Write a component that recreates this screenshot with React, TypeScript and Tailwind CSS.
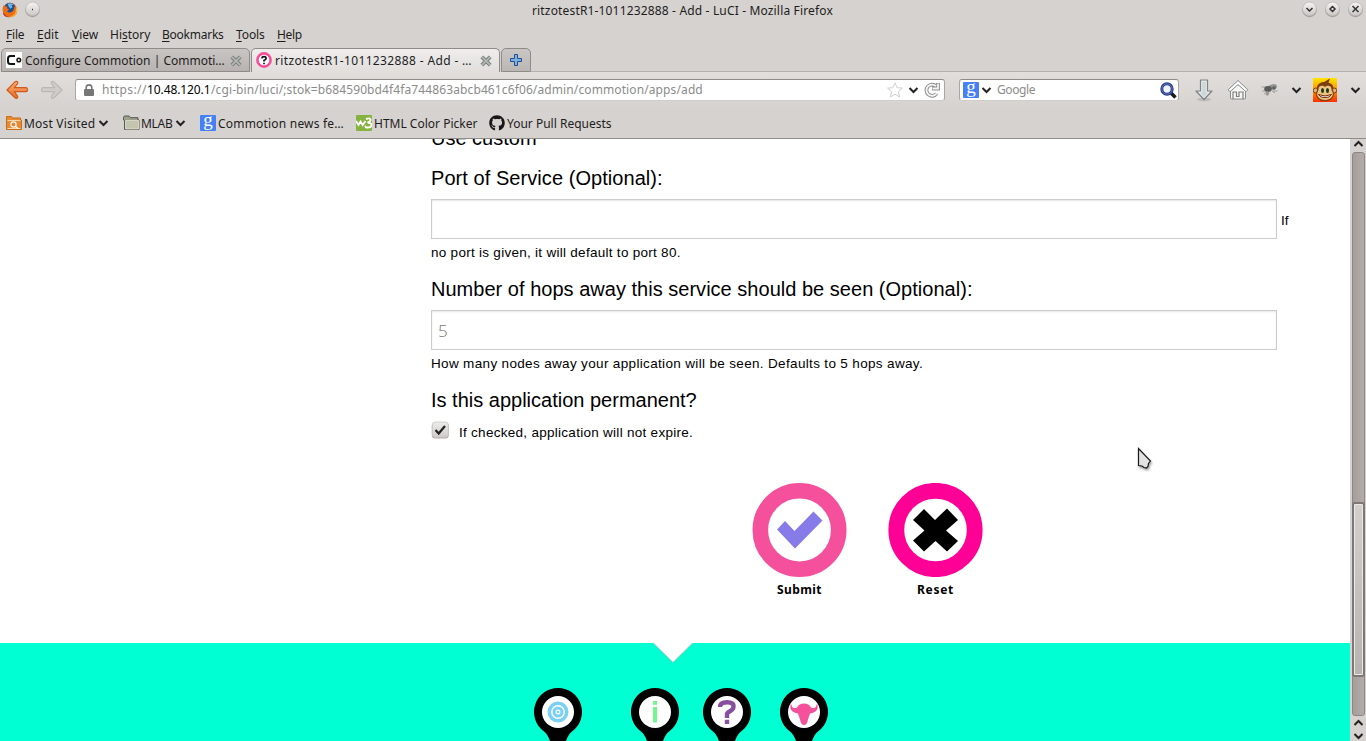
import type { ReactNode } from "react";
import { FaGithub } from "react-icons/fa";

function Chevron({ up = false, className = "" }: { up?: boolean; className?: string }) {
  return (
    <svg width="11" height="8" viewBox="0 0 11 8" className={`shrink-0 ${className}`} fill="none" stroke="#222" strokeWidth="2">
      <path d={up ? "M1.5 6 5.5 2l4 4" : "M1.5 2l4 4 4-4"} />
    </svg>
  );
}

function WindowButton({ children }: { children: ReactNode }) {
  return (
    <svg width="17" height="18" viewBox="0 0 17 18" className="shrink-0">
      <defs>
        <linearGradient id="knob" x1="0" y1="0" x2="0" y2="1">
          <stop offset="0" stopColor="#f6f5f4" />
          <stop offset="1" stopColor="#c9c6c3" />
        </linearGradient>
      </defs>
      <circle cx="8.500" cy="10" r="7.200" fill="#a19d9a" />
      <circle cx="8.500" cy="9" r="6.900" fill="url(#knob)" stroke="#b1adaa" strokeWidth=".6" />
      <g fill="none" stroke="#333" strokeWidth="1.500" transform="translate(0 .5)">{children}</g>
    </svg>
  );
}

function FirefoxIcon() {
  return (
    <svg width="16" height="16" viewBox="0 0 16 16" className="shrink-0">
      <circle cx="8" cy="8" r="7.200" fill="#d9490c" />
      <circle cx="7.800" cy="6.300" r="5.500" fill="#1f4f92" />
      <path d="M5.500 2c2.500-1.300 5-.5 6 1l-2 .3 1 2-2.500 1.500-1.500-2.500z" fill="#6fb5e4" />
      <path d="M1.500 3.200 3.300 4.600 5.500 4.400 5 6.200 7 7.300 6 8.600 5 9.200c1.500 2 4.800 1.800 6.300-.6.800-1.300.9-3 .4-4.400 2.400 1.800 3.400 4.600 2.600 7A7.300 7.300 0 0 1 1 10C.3 7.500.6 5 1.500 3.200z" fill="#ee6d13" />
      <path d="M13 3c2.500 2.500 2.800 6.200.9 9-1.600 2.200-4 3.200-6.400 2.800 3-.4 5.200-2 6-4.600.7-2.400.4-5-.5-7.200z" fill="#fbc02c" />
      <path d="M1.800 11c1 2.200 3 3.800 5.700 4.200-3 .4-5.800-1.200-6.500-4z" fill="#a91f10" />
    </svg>
  );
}

function CloseIcon() {
  return (
    <svg width="12" height="12" viewBox="0 0 12 12" className="mt-px shrink-0">
      <path d="M1.800 1.800l8.400 8.400M10.200 1.800l-8.400 8.400" stroke="#7d8480" strokeWidth="3.800" />
      <path d="M2 2l8 8M10 2l-8 8" stroke="#b9bcb8" strokeWidth="1.600" />
    </svg>
  );
}

function NavArrow({ back = false }: { back?: boolean }) {
  return (
    <svg width="23" height="20" viewBox="0 0 23 20" className="shrink-0">
      <defs>
        <linearGradient id="orange" x1="0" y1="0" x2="0" y2="1">
          <stop offset="0" stopColor="#fbb27b" />
          <stop offset="1" stopColor="#ea6a22" />
        </linearGradient>
      </defs>
      <path
        d={back ? "M1 10 9 1.800c2-1.300 3.500.6 2.400 2L8.300 7.700H20c2 0 2 4 0 4H8.300l3.100 4.100c1.200 1.600-.8 3.400-2.400 2z" : "M22 10 14 1.800c-2-1.300-3.500.6-2.400 2l3.100 3.900H3c-2 0-2 4 0 4h11.700l-3.100 4.100c-1.200 1.600.8 3.400 2.400 2z"}
        fill={back ? "url(#orange)" : "#cfccc9"}
        stroke={back ? "#cf5a1c" : "#bbb8b4"}
        strokeWidth="1.200"
        strokeLinejoin="round"
      />
    </svg>
  );
}

function GoogleIcon() {
  return (
    <span className="flex h-4 w-4 shrink-0 items-center justify-center rounded-[1px] bg-[#4680f8] font-['Liberation_Serif',serif] text-[19px] leading-none text-white">
      <span className="-mt-[7px]">g</span>
    </span>
  );
}

function Menu({ k, pre = "", post, className }: { k: string; pre?: string; post: string; className: string }) {
  return (
    <span className={`shrink-0 ${className}`}>
      {pre}
      <span className="underline underline-offset-2">{k}</span>
      {post}
    </span>
  );
}

function TitleBar() {
  return (
    <div className="flex h-[22px] items-start">
      <div className="flex w-[532px] gap-[6px] pl-[2px] pt-[2px]">
        <FirefoxIcon />
        <div className="-mt-[2px]">
          <WindowButton>
            <path d="M8 9h1" />
          </WindowButton>
        </div>
      </div>
      <span className="w-[769px] pt-[3px] leading-4 tracking-[0.16px]">ritzotestR1-1011232888 - Add - LuCI - Mozilla Firefox</span>
      <div className="flex gap-[6px]">
        <WindowButton>
          <path d="M5.500 7.500l3 3 3-3" />
        </WindowButton>
        <WindowButton>
          <path d="M8.500 6l2.500 2.500L8.500 11 6 8.500z" />
        </WindowButton>
        <WindowButton>
          <path d="M5.500 5.500l6 6M11.500 5.500l-6 6" />
        </WindowButton>
      </div>
    </div>
  );
}

function TabBar() {
  return (
    <div className="flex h-[24px] items-end">
      <div className="ml-px flex h-[24px] w-[249px] items-center rounded-t-[5px] border border-[#8f8b89] bg-linear-to-b from-[#c9c5c3] to-[#b8b3b1] pl-1">
        <span className="flex h-4 w-4 shrink-0 items-center bg-white">
          <svg width="16" height="16" viewBox="0 0 16 16" fill="none" stroke="#111" strokeWidth="2">
            <path d="M9 4H4.500Q2 4 2 6.500v3Q2 12 4.500 12H9" />
            <circle cx="12.800" cy="8" r="1.800" strokeWidth="1.500" />
          </svg>
        </span>
        <span className="ml-[3px] w-[205px] shrink-0 pt-[2px]">Configure Commotion | Commoti…</span>
        <CloseIcon />
      </div>
      <div className="ml-px flex h-[24px] w-[249px] items-center rounded-t-[5px] border border-b-0 border-[#8f8b89] bg-linear-to-b from-[#efeeed] to-[#e1dedc] pl-1">
        <svg width="16" height="16" viewBox="0 0 16 16" className="-mt-px shrink-0">
          <circle cx="8" cy="8" r="6.600" fill="#fff" stroke="#f4509a" strokeWidth="2.600" />
          <path d="M5.800 6.400Q6 4.700 8 4.700t2.200 1.600Q10.200 7.400 8 8.600v1M8 10.700v1.500" fill="none" stroke="#111" strokeWidth="1.700" />
        </svg>
        <span className="ml-[3px] w-[205px] shrink-0 pt-px tracking-[0.36px]">ritzotestR1-1011232888 - Add - …</span>
        <CloseIcon />
      </div>
      <div className="ml-px flex h-[24px] w-[30px] items-center justify-center rounded-t-[5px] border border-[#8f8b89] bg-linear-to-b from-[#cac6c4] to-[#bbb7b5]">
        <svg width="12" height="12" viewBox="0 0 12 12">
          <path d="M4.500.5h3v4h4v3h-4v4h-3v-4h-4v-3h4z" fill="#7fb0e2" stroke="#1f4f94" strokeLinejoin="round" />
        </svg>
      </div>
      <div className="h-px flex-1 bg-[#b5b1ae]" />
    </div>
  );
}

function NavBar() {
  return (
    <div className="flex h-[36px] items-center bg-linear-to-b from-[#e1dedc] to-[#d6d2cf]">
      <div className="flex w-[75px] gap-[11px] pl-[6px]">
        <NavArrow back />
        <NavArrow />
      </div>
      <div className="flex h-[22px] w-[870px] items-center rounded-[3px] border border-b-[#d0cdca] border-l-[#aaa6a3] border-r-[#aaa6a3] border-t-[#8f8b88] bg-white pl-2">
        <svg width="10" height="12" viewBox="0 0 10 12" className="shrink-0">
          <path d="M2.200 6V3.700a2.800 2.800 0 0 1 5.600 0V6" fill="none" stroke="#777" strokeWidth="1.600" />
          <rect x="0" y="5" width="10" height="7" rx="1" fill="#777" />
        </svg>
        <span className="ml-2 w-[45px] shrink-0 tracking-[0.45px] text-[#8b8b8b]">https://</span>
        <span className="w-[64px] shrink-0 tracking-[-0.1px] text-black">10.48.120.1</span>
        <span className="w-[676px] shrink-0 tracking-[0.11px] text-[#8b8b8b]">
          /cgi-bin/luci/;stok=b684590bd4f4fa744863abcb461c6f06/admin/commotion/apps/add
        </span>
        <svg width="16" height="16" viewBox="0 0 16 16" className="shrink-0">
          <path d="M8 .8l2.100 4.900 5.300.4-4 3.500 1.200 5.400L8 12.200 3.400 15l1.200-5.400-4-3.500 5.300-.4z" fill="#fff" stroke="#cfcfcf" />
        </svg>
        <Chevron className="ml-[5px]" />
        <svg width="16" height="16" viewBox="0 0 16 16" className="ml-[5px] shrink-0" fill="none">
          <path d="M12.600 11.500A5.600 5.600 0 1 1 12 4.200M8 6.500h6V1" stroke="#8f8f8f" strokeWidth="3.800" />
          <path d="M12.600 11.500A5.600 5.600 0 1 1 12 4.200M8.500 6.500H14V1.500" stroke="#f4f4f4" strokeWidth="1.800" />
        </svg>
      </div>
      <div className="ml-[14px] flex h-[22px] w-[220px] shrink-0 items-center rounded-[3px] border border-b-[#d0cdca] border-l-[#aaa6a3] border-r-[#aaa6a3] border-t-[#8f8b88] bg-white pl-[3px]">
        <GoogleIcon />
        <Chevron className="ml-[2px]" />
        <span className="ml-[5px] w-[163px] shrink-0 tracking-[-0.4px] text-[#8b8b8b]">Google</span>
        <svg width="17" height="17" viewBox="0 0 17 17" className="shrink-0">
          <path d="M10.500 10.500l5 5" stroke="#1b1b1b" strokeWidth="3.500" />
          <circle cx="7" cy="7" r="5.200" fill="#eef3fb" stroke="#283a86" strokeWidth="3" />
          <circle cx="7" cy="7" r="5.200" fill="none" stroke="#5c72ba" />
        </svg>
      </div>
      <svg width="20" height="23" viewBox="0 0 20 23" className="ml-[15px] shrink-0">
        <ellipse cx="10" cy="20.500" rx="7" ry="1.800" fill="#bfbbb8" />
        <path d="M6.500 1h7v11h4.500L10 20.500 2 12h4.500z" fill="#cdd5d6" stroke="#7e8383" strokeWidth="1.200" strokeLinejoin="round" />
        <path d="M7.800 2.300h4.400v11h2.800L10 18.600l-5-5.300h2.800z" fill="none" stroke="#eef1f1" strokeWidth=".8" />
      </svg>
      <svg width="22" height="22" viewBox="0 0 22 22" className="ml-[13px] shrink-0">
        <path d="M3.500 10v9q0 1 1 1h13q1 0 1-1v-9L11 5z" fill="#f7f6f5" stroke="#8a8c89" />
        <path d="M11 1.500l9.800 9.300-1.800 1.900L11 5.600l-8 7.100-1.800-1.900z" fill="#fff" stroke="#85878a" strokeLinejoin="round" />
        <path d="M6 20v-7h3.500v4.500h2.500V13H16v7" fill="none" stroke="#7e807d" strokeWidth="1.200" />
      </svg>
      <svg width="18" height="14" viewBox="0 0 18 14" className="ml-[12px] shrink-0">
        <path d="M.5 4h4M1 8h3M3 11l3-2M14 10l-3-2M16.500 8H12" stroke="#a19e9c" />
        <ellipse cx="11.500" cy="4" rx="4.500" ry="2.700" fill="#949392" transform="rotate(-15 11.500 4)" />
        <ellipse cx="7" cy="6" rx="3.800" ry="3" fill="#5b5b5c" />
        <circle cx="13" cy="5" r="1.800" fill="#5f5f5f" />
        <ellipse cx="6.500" cy="10.500" rx="1.700" ry="2.200" fill="#9c9a99" transform="rotate(25 6.500 10.500)" />
      </svg>
      <Chevron className="ml-[12px]" />
      <svg width="24" height="24" viewBox="0 0 24 24" className="ml-[11px] shrink-0">
        <defs>
          <linearGradient id="sun" x1="0" y1="0" x2="0" y2="1">
            <stop offset="0" stopColor="#ffe600" />
            <stop offset=".55" stopColor="#ff8a00" />
            <stop offset="1" stopColor="#ff3000" />
          </linearGradient>
        </defs>
        <path d="M0 0h24v24H0z" fill="url(#sun)" />
        <circle cx="2.800" cy="12.500" r="2.500" fill="#e8b46c" stroke="#7a3c10" />
        <circle cx="21.200" cy="12.500" r="2.500" fill="#e8b46c" stroke="#7a3c10" />
        <path d="M4 12C3 5 9 4 11 4l6-3.500-1.500 4.200C20 6 21 9 20 12c3 7-2 11.300-8 11.300S1 19 4 12z" fill="#7c3f12" />
        <path d="M5.500 12c-.5-5 4.500-5 6.500-3 2-2 7-2 6.500 3 4 6-1.500 10-6.500 10S1.500 18 5.500 12z" fill="#efc47e" />
        <ellipse cx="9.500" cy="12.500" rx="1.500" ry="2.500" fill="#143a24" />
        <ellipse cx="14.500" cy="12.500" rx="1.500" ry="2.500" fill="#143a24" />
        <path d="M5.500 16.500q6.500 3 13 0-1.500 3.200-6.500 3.200t-6.500-3.200z" fill="#fff" stroke="#6c2a10" />
      </svg>
      <Chevron className="ml-[13px]" />
    </div>
  );
}

function BookmarksBar() {
  return (
    <div className="flex h-[31px] items-center border-b border-[#8f8c8a] leading-none">
      <svg width="16" height="16" viewBox="0 0 16 16" className="ml-[6px] shrink-0">
        <path d="M.5 1.500h5l1 1.500h8v2h1v9.500H.5z" fill="#e68a33" stroke="#c96d14" />
        <path d="M1.500 5.500h13M1.500 13.500h13" stroke="#fbe2c0" strokeWidth=".9" />
        <circle cx="7.500" cy="9.500" r="2.600" fill="#e08436" stroke="#fff" strokeWidth="1.100" />
        <path d="M9.500 11.500l2.500 2" stroke="#fff" strokeWidth="1.500" />
      </svg>
      <span className="ml-[2px] w-[74px] shrink-0 pt-[2px] tracking-[0.2px]">Most Visited</span>
      <Chevron className="mr-[14px]" />
      <svg width="17" height="16" viewBox="0 0 17 16" className="shrink-0">
        <path d="M.5 2.500Q.5 1 2 1h4l1.500 1.700H15V5h1v9.500H1.500V5.500L.5 5z" fill="#9da08c" stroke="#55584c" />
        <path d="M2.500 5.500h13v8.500h-13z" fill="#c3c5b1" stroke="#dfe1d2" strokeWidth=".8" />
      </svg>
      <span className="ml-px w-[34px] shrink-0 pt-[2px] tracking-[-0.3px]">MLAB</span>
      <Chevron className="mr-[14px]" />
      <GoogleIcon />
      <span className="ml-[2px] w-[138px] shrink-0 pt-[2px] tracking-[0.2px]">Commotion news fe…</span>
      <svg width="16" height="16" viewBox="0 0 16 16" className="shrink-0">
        <rect width="16" height="16" rx="1" fill="#86b340" />
        <path d="M0 6l2.500 4 2-3.500 2.200 3.500L9.500 6" fill="none" stroke="#fff" strokeWidth="1.800" />
        <path d="M10 4q4-1.500 4.500.5T11.500 7.500q4 0 4 2.500T12 12.500 10 11" fill="none" stroke="#fff" strokeWidth="1.900" />
      </svg>
      <span className="ml-[2px] w-[115px] shrink-0 pt-[2px]">HTML Color Picker</span>
      <FaGithub size={16} color="#181616" className="shrink-0" />
      <span className="ml-[2px] pt-[2px]">Your Pull Requests</span>
    </div>
  );
}

function Scrollbar() {
  return (
    <div className="flex w-4 shrink-0 flex-col items-center bg-[#d6d2cf] font-sans">
      <Chevron up className="mt-px" />
      <div className="mt-1 flex h-[564px] w-[13px] flex-col rounded-[3px] border border-[#8c8684] bg-linear-to-r from-[#a59e9b] to-[#b3aca9]">
        <div className="-ml-px mt-[349px] h-[175px] w-[13px] shrink-0 rounded-[3px] border-2 border-[#7d7775] bg-[#ebe9e8] p-px">
          <div className="h-full w-full bg-linear-to-b from-[#d2cfcd] to-[#b7b3b1]" />
        </div>
      </div>
      <Chevron up className="mt-[3px]" />
      <Chevron className="mt-[5px]" />
    </div>
  );
}

const field = "block h-10 w-[846px] shrink-0 border border-[#ccc] bg-white px-[6px] font-['Open_Sans','Noto_Sans',sans-serif] text-[17px] font-light text-black shadow-[inset_0_1px_2px_rgba(0,0,0,0.1)] outline-none placeholder:text-[#777]";

function ServiceForm() {
  return (
    <form className="flex h-[504px] flex-col bg-white pl-[431px] font-['Liberation_Sans',Arial,sans-serif] text-[13.5px] leading-[18px] tracking-[0.28px] text-black">
      <h3 className="-mt-[16px] h-[41px] shrink-0 text-xl leading-[30px] tracking-normal">Use custom</h3>
      <label className="h-[35px] shrink-0 text-xl leading-[28px] tracking-[0.06px]">Port of Service (Optional):</label>
      <div className="flex items-center">
        <input className={field} />
        <span className="ml-1 mt-[3px] tracking-normal">If</span>
      </div>
      <p className="mt-[5px]">no port is given, it will default to port 80.</p>
      <label className="mt-[13px] h-[35px] shrink-0 text-xl leading-[28px] tracking-[0.02px]">Number of hops away this service should be seen (Optional):</label>
      <input className={field} placeholder="5" />
      <p className="mt-[5px] tracking-[0.34px]">How many nodes away your application will be seen. Defaults to 5 hops away.</p>
      <label className="mt-[13px] h-[38px] shrink-0 text-xl leading-[28px] tracking-normal">Is this application permanent?</label>
      <div className="flex items-center">
        <svg width="18" height="18" viewBox="0 0 18 18" className="-mt-[6px] shrink-0">
          <defs>
            <linearGradient id="check" x1="0" y1="0" x2="0" y2="1">
              <stop offset="0" stopColor="#eeedec" />
              <stop offset="1" stopColor="#cfccca" />
            </linearGradient>
          </defs>
          <rect x=".8" y="1.500" width="17" height="16" rx="3.500" fill="#b0adab" />
          <rect x="1.300" y="1" width="16" height="15.200" rx="3" fill="url(#check)" stroke="#c7c4c2" strokeWidth=".7" />
          <path d="M4.500 9l3.200 3.500 6.300-7.500" fill="none" stroke="#222" strokeWidth="2.200" />
        </svg>
        <span className="ml-[10px]">If checked, application will not expire.</span>
      </div>
      <div className="-ml-[431px] mt-[41px] flex gap-[42px] pl-[752px] font-['Noto_Sans',sans-serif] text-xs font-bold">
        <button type="button" className="flex w-[95px] flex-col items-center tracking-[0.4px]">
          <svg width="95" height="94" viewBox="0 0 95 94">
            <circle cx="47.500" cy="47" r="39.200" fill="#fff" stroke="#f4509b" strokeWidth="15.600" />
            <path d="M25 46.500l8-8.500 9.500 10 19-19.500 9 9L43 65.500z" fill="#877be9" />
          </svg>
          <span className="mt-[4px] leading-[18px]">Submit</span>
        </button>
        <button type="button" className="-ml-px flex w-[95px] flex-col items-center tracking-[0.7px]">
          <svg width="95" height="94" viewBox="0 0 95 94">
            <circle cx="47.500" cy="47" r="39.200" fill="#fff" stroke="#ff0097" strokeWidth="15.800" />
            <path d="M25 37l11-11 11 11 12-11.500L70 37 58 47.500 70 58 59 68.500 47.500 58 36 68.500 25 57.500 36.500 47.500z" fill="#000" />
          </svg>
          <span className="mt-[4px] leading-[18px]">Reset</span>
        </button>
      </div>
    </form>
  );
}

function Pin({ children, className }: { children: ReactNode; className: string }) {
  return (
    <svg width="48" height="53" viewBox="0 0 48 53" className={`shrink-0 ${className}`}>
      <path d="M24 0a24 24 0 0 1 14 43.500Q34.500 46 32 53H16q-2.500-7-6-9.500A24 24 0 0 1 24 0z" fill="#000" />
      <circle cx="24" cy="24" r="16" fill="#fff" />
      {children}
    </svg>
  );
}

function Footer() {
  return (
    <footer className="flex flex-1 flex-col bg-[#00ffd2]">
      <svg width="40" height="21" viewBox="0 0 40 21" className="ml-[653px] shrink-0">
        <path d="M0 0h40L20 19.500z" fill="#fff" />
        <path d="M.5 0 20 19.500 39.500 0" fill="none" stroke="#8fa39e" strokeWidth=".7" />
      </svg>
      <div className="mt-6 flex pl-[534px]">
        <Pin className="">
          <g fill="none" stroke="#7bd0f4">
            <circle cx="24" cy="24" r="8.700" strokeWidth="3.600" />
            <circle cx="24" cy="24" r="4" strokeWidth="3" />
          </g>
          <circle cx="24" cy="24" r="1.300" fill="#7bd0f4" />
        </Pin>
        <Pin className="ml-[49px]">
          <path d="M22 13h4v3.800h-4zM22 19h4v15.500h-4z" fill="#74f58d" />
        </Pin>
        <Pin className="ml-6">
          <path d="M17 19q0-4.800 7-4.800t6.500 4.600q0 2.600-3.500 4.400T24 27v3M24 31.800v4.200" fill="none" stroke="#874f9e" strokeWidth="4.400" />
        </Pin>
        <Pin className="ml-[29px]">
          <path d="M11 15.500q-3 8 7 10l2 6q1 5.500 4 5.500t4-5.500l2-6q10-2 7-10l-1 3q-1.500 3-5 1Q29 15.500 24 15.500T17 19.500q-3.500 2-5-1z" fill="#f4509b" />
        </Pin>
      </div>
    </footer>
  );
}

export default function App() {
  return (
    <div className="relative flex h-[741px] w-[1366px] flex-col overflow-hidden bg-[#d6d2cf] font-['Noto_Sans',sans-serif] text-xs text-[#1d1d1d]">
      <div className="flex h-[139px] shrink-0 flex-col">
        <TitleBar />
        <div className="flex h-[26px] items-center pb-px pl-[6px]">
          <Menu k="F" post="ile" className="w-[31px] tracking-[-0.2px]" />
          <Menu k="E" post="dit" className="w-[35px]" />
          <Menu k="V" post="iew" className="w-[38px]" />
          <Menu pre="Hi" k="s" post="tory" className="w-[52px]" />
          <Menu k="B" post="ookmarks" className="w-[74px] tracking-[-0.25px]" />
          <Menu k="T" post="ools" className="w-[41px] tracking-[-0.1px]" />
          <Menu k="H" post="elp" className="tracking-[-0.3px]" />
        </div>
        <TabBar />
        <NavBar />
        <BookmarksBar />
      </div>
      <div className="flex h-[602px] shrink-0">
        <main className="flex w-[1350px] shrink-0 flex-col overflow-hidden">
          <ServiceForm />
          <Footer />
        </main>
        <Scrollbar />
      </div>
      <svg width="18" height="25" viewBox="0 0 18 25" className="absolute left-[1136px] top-[446px] drop-shadow-[1px_2px_1px_rgba(0,0,0,0.35)]">
        <path d="M2.500 2.500v17l3.500.5 2 1.500 2.500.5 1.500-1.500.5-3 2-2.500z" fill="#e2e2e2" stroke="#1a1a1a" strokeWidth="1.200" />
      </svg>
    </div>
  );
}
